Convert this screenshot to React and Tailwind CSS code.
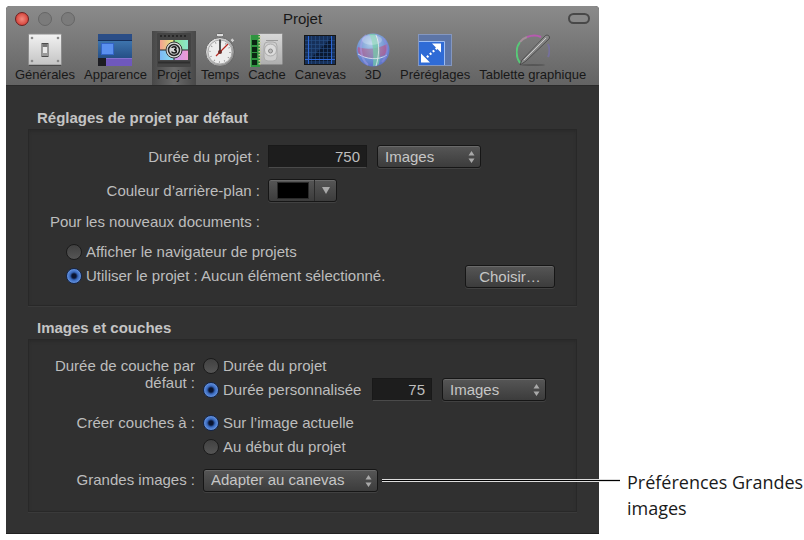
import React, { useState } from 'react';
import clsx from 'clsx';

const Switch = () => (
  <svg width="34" height="34" viewBox="0 0 34 34">
    <defs>
      <linearGradient id="plate" x1="0" y1="0" x2="0" y2="1">
        <stop offset="0" stopColor="#f2f2f2" />
        <stop offset="1" stopColor="#c4c4c4" />
      </linearGradient>
    </defs>
    <rect x="0.5" y="1" width="33" height="31" rx="1" fill="url(#plate)" stroke="#8d8d8d" />
    <path d="M1 32.500h32" stroke="#4a4a4a" />
    {[[4, 5], [30, 5], [4, 28], [30, 28]].map(([x, y]) => (
      <circle key={`${x}-${y}`} cx={x} cy={y} r="1.300" fill="#8a8a8a" />
    ))}
    <rect x="14" y="10.500" width="6" height="13" fill="#e9e9e9" stroke="#4c4c4c" />
    <path d="M14.500 11h5v3h-5z" fill="#777" />
    <path d="M14.500 20h5v3h-5z" fill="#9a9a9a" />
  </svg>
);

const Appearance = () => (
  <svg width="34" height="34" viewBox="0 0 34 34">
    <defs>
      <linearGradient id="blueBody" x1="0" y1="0" x2="0" y2="1">
        <stop offset="0" stopColor="#3d74ad" />
        <stop offset="1" stopColor="#264f86" />
      </linearGradient>
    </defs>
    <rect y="1" width="34" height="6" fill="#2a4d86" />
    <path d="M0 7.500h34" stroke="#152f5c" />
    <rect y="8" width="34" height="17" fill="url(#blueBody)" />
    <rect x="3.500" y="10.500" width="12" height="11" fill="#5a90f0" stroke="#3465c8" />
    <rect y="25" width="8" height="8" fill="#1d1d22" />
    <rect x="8" y="25" width="26" height="8" fill="#6f58bd" />
    <path d="M8 25.500h26" stroke="#8672cf" />
  </svg>
);

const Project = () => (
  <svg width="34" height="34" viewBox="0 0 34 34">
    <defs>
      <linearGradient id="warm">
        <stop offset="0" stopColor="#f4a08f" />
        <stop offset="1" stopColor="#e6ef86" />
      </linearGradient>
      <linearGradient id="fresh">
        <stop offset="0" stopColor="#8be58c" />
        <stop offset="1" stopColor="#8ce6cf" />
      </linearGradient>
      <linearGradient id="cold">
        <stop offset="0" stopColor="#7cb8f5" />
        <stop offset="1" stopColor="#8ee3ec" />
      </linearGradient>
      <linearGradient id="rose">
        <stop offset="0" stopColor="#c79af0" />
        <stop offset="1" stopColor="#f09ad2" />
      </linearGradient>
    </defs>
    <rect width="34" height="34" rx="1" fill="#444" />
    <path d="M3 3h28" stroke="#272727" strokeWidth="2" strokeDasharray="2 2" />
    <path d="M1 29.500h32" stroke="#2e2e2e" strokeWidth="2" />
    <rect x="3" y="7" width="14" height="10" fill="url(#warm)" />
    <rect x="17" y="7" width="14" height="10" fill="url(#fresh)" />
    <rect x="3" y="17" width="14" height="10" fill="url(#cold)" />
    <rect x="17" y="17" width="14" height="10" fill="url(#rose)" />
    <path d="M3 17h28M17 7v20" stroke="#262626" />
    <circle cx="17" cy="17" r="8" fill="#d9d9d9" stroke="#3a3a3a" />
    <circle cx="17" cy="17" r="5.500" fill="#d4d4d4" stroke="#262626" strokeWidth="1.500" />
    <path d="M15 15c0-1.600 4-1.700 4 .3 0 1.300-1.500 1.500-2 1.500.8 0 2.300.3 2.300 1.700 0 2-4.300 2-4.500 0" fill="none" stroke="#161616" strokeWidth="1.500" />
  </svg>
);

const Stopwatch = () => (
  <svg width="34" height="34" viewBox="0 0 34 34">
    <defs>
      <linearGradient id="steel" x1="0" y1="0" x2="1" y2="1">
        <stop offset="0" stopColor="#f4f4f4" />
        <stop offset="1" stopColor="#777" />
      </linearGradient>
    </defs>
    <rect x="13.500" y="0.500" width="7" height="3" rx="1" fill="#ddd" stroke="#666" />
    <path d="M15 3h4v3h-4z" fill="#888" />
    <path d="M27 7l2.500-2 2 2.500-2 2z" fill="#ccc" stroke="#666" strokeWidth="0.500" />
    <circle cx="17" cy="19" r="14.500" fill="url(#steel)" stroke="#666" />
    <circle cx="17" cy="19" r="12" fill="#ededed" stroke="#aaa" />
    <circle cx="17" cy="19" r="10" fill="none" stroke="#999" strokeDasharray="1 4.236" strokeWidth="1.500" />
    <path d="M17 6.500V19" stroke="#222" strokeWidth="1.500" />
    <path d="M13 23L25 11" stroke="#b8271f" strokeWidth="1.300" />
    <circle cx="17" cy="19" r="2" fill="#6b2a26" />
  </svg>
);

const Cache = () => (
  <svg width="34" height="34" viewBox="0 0 34 34">
    <defs>
      <linearGradient id="disk" x1="0" y1="0" x2="0" y2="1">
        <stop offset="0" stopColor="#d8d8d8" />
        <stop offset="1" stopColor="#aeaeae" />
      </linearGradient>
    </defs>
    <rect x="8" y="0.500" width="24.500" height="31" rx="1" fill="url(#disk)" stroke="#8c8c8c" />
    <path d="M16 7.500h12" stroke="#9a9a9a" />
    <rect x="14" y="9" width="13" height="19" rx="4" fill="#cecece" stroke="#aaa" />
    <circle cx="20.500" cy="17" r="6" fill="#dcdcdc" stroke="#aaa" />
    <circle cx="20.500" cy="18" r="2" fill="#bbb" stroke="#888" />
    <path d="M0 2h10v32H0z" fill="#2f9440" />
    <path d="M9.500 3v30" stroke="#c6cf8e" strokeWidth="2" strokeDasharray="1.500 1.500" />
    {[7, 14, 20, 27].map((y) => (
      <rect key={y} x="2" y={y} width="5" height="5" fill="#0b2713" />
    ))}
    <path d="M0 2v32" stroke="#a5d19b" />
  </svg>
);

const Canvas = () => (
  <svg width="34" height="34" viewBox="0 0 34 34">
    <rect x="1.500" y="2.500" width="31" height="29" fill="#16305a" stroke="#161616" />
    <path d="M5 28L28 5v23z" fill="#0a1830" />
    <path d="M8.500 3v28M12.500 3v28M16.500 3v28M20.500 3v28M24.500 3v28M2 7.500h30M2 11.500h30M2 15.500h30M2 19.500h30M2 23.500h30" stroke="#2a528a" strokeWidth="0.600" />
    <path d="M28.500 3v28M5.500 3v28M2 26.500h30" stroke="#2d68d8" />
  </svg>
);

const Sphere = () => (
  <svg width="34" height="34" viewBox="0 0 34 34">
    <defs>
      <radialGradient id="ball" cx="0.450" cy="0.300" r="0.750">
        <stop offset="0" stopColor="#b0cfe8" />
        <stop offset="0.600" stopColor="#6f92d2" />
        <stop offset="1" stopColor="#5a6cc4" />
      </radialGradient>
      <linearGradient id="belt">
        <stop offset="0" stopColor="#c4487f" />
        <stop offset="0.500" stopColor="#9a7fa6" />
        <stop offset="1" stopColor="#c4487f" />
      </linearGradient>
    </defs>
    <circle cx="17" cy="17" r="16.500" fill="url(#ball)" />
    <path d="M2 14c8 3 20 2 29-3 1 4 0 8-2 11-8 4-18 4-25 0-2-2-3-5-2-8z" fill="url(#belt)" opacity="0.650" />
    <path d="M13 1c4 6 5 20 4 32 3 0 5-1 6-2 2-11 0-23-4-30z" fill="#74cfa6" opacity="0.700" />
    <path d="M2 21c8 5 20 7 29 1M20 33c3-10 4-22 0-31" fill="none" stroke="#e8e6ee" opacity="0.800" />
    <path d="M10 2C2 10 4 25 12 32" fill="none" stroke="#a7a0ea" strokeWidth="2" opacity="0.500" />
    <path d="M27 5c6 8 5 17-1 24" fill="none" stroke="#8f8ae0" strokeWidth="2" opacity="0.500" />
    <ellipse cx="16" cy="7" rx="10" ry="5" fill="#fff" opacity="0.250" />
  </svg>
);

const Presets = () => (
  <svg width="34" height="34" viewBox="0 0 34 34">
    <rect x="0.500" y="1.500" width="33" height="31" fill="#5d75a6" stroke="#8497c0" />
    <rect x="1" y="8" width="25" height="24" fill="#2f6bd6" />
    <path d="M1 8.500h25.500V32" fill="none" stroke="#9cbcf2" />
    <path d="M6 27L21 13" stroke="#fff" strokeWidth="2.200" strokeDasharray="2 2" />
    <path d="M14 10.500h9v9zM3 20.500v9h9z" fill="#fff" />
  </svg>
);

const Tablet = () => (
  <svg width="34" height="34" viewBox="0 0 34 34">
    <defs>
      <linearGradient id="pen" x1="0" y1="0" x2="1" y2="1">
        <stop offset="0" stopColor="#e2e2e2" />
        <stop offset="1" stopColor="#2c2c2c" />
      </linearGradient>
    </defs>
    <ellipse cx="17" cy="32" rx="12" ry="1" fill="#484848" opacity="0.600" />
    <g fill="none" strokeWidth="2">
      <path d="M4 30C-1 23 0 14 4 9" stroke="#58c978" />
      <path d="M4 9c2-3 4-4 7-5" stroke="#a58f9a" />
      <path d="M11 4c5-2 10-2 14 0" stroke="#b75ab0" />
      <path d="M32 11c2 5 2 9 0 13" stroke="#75709a" />
    </g>
    <path d="M4 32L6 27 29 3c2-2 6 0 4 3L10 28z" fill="url(#pen)" stroke="#3a3a3a" strokeWidth="0.700" />
    <path d="M8 27L30 5" stroke="#c9c9c9" />
  </svg>
);

const TABS = [
  { label: 'Générales', Icon: Switch },
  { label: 'Apparence', Icon: Appearance },
  { label: 'Projet', Icon: Project },
  { label: 'Temps', Icon: Stopwatch },
  { label: 'Cache', Icon: Cache },
  { label: 'Canevas', Icon: Canvas },
  { label: '3D', Icon: Sphere },
  { label: 'Préréglages', Icon: Presets },
  { label: 'Tablette graphique', Icon: Tablet },
];

const RAISED = 'h-[23px] rounded-[3px] border border-[#161616] bg-linear-to-b from-[#565656] to-[#3c3c3c] shadow-[inset_0_1px_0_#6a6a6a,0_1px_0_#414141]';

const Popup = ({ id, label, options, className }) => (
  <div className={clsx('relative', className)}>
    <select id={id} aria-label={label} className={clsx(RAISED, 'block w-full appearance-none pl-[7px] pr-5 text-[#c6c6c6]')}>
      {options.map((o) => <option key={o}>{o}</option>)}
    </select>
    <svg className="pointer-events-none absolute top-[6px] right-[6px]" width="7" height="12" viewBox="0 0 7 12" fill="#a9a9a9">
      <path d="M3.500 0L6.500 4.500h-6zM3.500 12L6.500 7.500h-6z" />
    </svg>
  </div>
);

const NumberField = ({ id, label, value, className }) => (
  <input
    id={id}
    aria-label={label}
    defaultValue={value}
    className={clsx('h-[23px] border border-[#191919] border-b-[#4a4a4a] bg-[#1d1d1d] pr-[6px] text-right text-[#bdbdbd]', className)}
  />
);

const Radio = ({ name, label, defaultChecked, className }) => (
  <label className={clsx('flex h-6 items-center gap-1 whitespace-nowrap', className)}>
    <input
      type="radio"
      name={name}
      defaultChecked={defaultChecked}
      className="size-4 shrink-0 appearance-none rounded-full border border-[#1b1b1b] bg-linear-to-b from-[#414141] to-[#555555] checked:border-[#14264a] checked:bg-radial checked:from-[#0a1430] checked:from-20% checked:via-[#3767bb] checked:via-40% checked:to-[#6c9ae6] checked:to-75%"
    />
    {label}
  </label>
);

const Group = ({ title, children }) => (
  <section>
    <h2 className="ml-[9px] h-[21px] leading-5 font-bold text-[#c4c4c4]">{title}</h2>
    <div className="border border-[#282828] bg-[#303030] shadow-[0_1px_0_#3a3a3a,inset_0_2px_3px_#2b2b2b]">{children}</div>
  </section>
);

export default function App() {
  const [tab, setTab] = useState('Projet');

  return (
    <div className="flex bg-white py-[6px] pl-[6px] font-['Liberation_Sans',Arial,sans-serif] text-[15px] leading-5 text-[#bdbdbd]">
      <main className="min-w-0 flex-1 rounded-t-[4px] border-b border-[#222222] bg-[#323232]">
        <header className="rounded-t-[4px] border-b border-[#2a2a2a] bg-linear-to-b from-[#8b8b8b] to-[#636363] text-[#181818]">
          <div className="grid h-[25px] grid-cols-3 items-center px-[9px]">
            <div className="flex gap-[9px]">
              <button aria-label="Fermer" className="size-[14px] rounded-full border border-[#6b2020] bg-radial from-[#f28a80] to-[#c81e1e]" />
              <button aria-label="Réduire" className="size-[14px] rounded-full border border-[#666666] bg-[#7b7b7b]" />
              <button aria-label="Agrandir" className="size-[14px] rounded-full border border-[#666666] bg-[#7b7b7b]" />
            </div>
            <h1 className="text-center">Projet</h1>
            <button aria-label="Masquer la barre" className="h-[11px] w-[22px] justify-self-end rounded-full border-2 border-[#484848] bg-[#888888]" />
          </div>
          <nav className="flex gap-px pl-[5px]">
            {TABS.map(({ label, Icon }) => (
              <button
                key={label}
                onClick={() => setTab(label)}
                className={clsx(
                  'flex h-[54px] min-w-[44px] flex-col items-center px-1 pt-[2px] whitespace-nowrap',
                  tab === label && 'bg-linear-to-r from-[#484848] via-[#6a6a6a] to-[#484848]',
                )}
              >
                <Icon />
                <span className="text-[13px] leading-4">{label}</span>
              </button>
            ))}
          </nav>
        </header>

        <div className="flex flex-col gap-3 px-[22px] pt-[22px] pb-[21px]">
          <Group title="Réglages de projet par défaut">
            <div className="grid grid-cols-[231px_1fr] items-center gap-x-2 pt-[15px]">
              <label htmlFor="duree" className="text-right">Durée du projet :</label>
              <div className="flex gap-[10px]">
                <NumberField id="duree" value="750" className="w-[99px]" />
                <Popup label="Unité de durée" options={['Images', 'Secondes']} className="w-[104px]" />
              </div>
              <label htmlFor="couleur" className="mt-[11px] text-right">Couleur d’arrière-plan :</label>
              <button id="couleur" className={clsx(RAISED, 'mt-[11px] flex w-[69px] items-center')}>
                <span className="ml-2 h-[17px] w-8 border border-[#2a2a2a] bg-black" />
                <span className="ml-[5px] flex h-full flex-1 items-center justify-center border-l border-[#2a2a2a]">
                  <svg width="8" height="7" viewBox="0 0 8 7" fill="#a9a9a9"><path d="M0 0h8L4 7z" /></svg>
                </span>
              </button>
              <p className="mt-[10px] text-right">Pour les nouveaux documents :</p>
            </div>
            <div className="flex items-end justify-between pt-2 pr-[21px] pb-[17px] pl-[37px]">
              <div>
                <Radio name="nouveau" label="Afficher le navigateur de projets" />
                <Radio name="nouveau" label="Utiliser le projet : Aucun élément sélectionné." defaultChecked />
              </div>
              <button className={clsx(RAISED, 'w-[90px] text-[#c6c6c6]')}>Choisir…</button>
            </div>
          </Group>

          <Group title="Images et couches">
            <div className="grid grid-cols-[166px_1fr] gap-x-2 gap-y-[9px] pt-[14px] pb-[19px]">
              <p className="pt-[3px] pl-5 text-right leading-[17px]">Durée de couche par défaut :</p>
              <div>
                <Radio name="couche" label="Durée du projet" />
                <div className="flex">
                  <Radio name="couche" label="Durée personnalisée" defaultChecked className="w-[169px]" />
                  <NumberField label="Durée de couche" value="75" className="w-[60px]" />
                  <Popup label="Unité de couche" options={['Images', 'Secondes']} className="ml-[10px] w-[104px]" />
                </div>
              </div>
              <p className="text-right leading-6">Créer couches à :</p>
              <div>
                <Radio name="creer" label="Sur l’image actuelle" defaultChecked />
                <Radio name="creer" label="Au début du projet" />
              </div>
              <label htmlFor="grandes" className="text-right leading-6">Grandes images :</label>
              {/* leader line runs out of the window to the caption */}
              <div className="-mr-[44px] flex items-center gap-1">
                <Popup id="grandes" options={['Adapter au canevas', 'Conserver la taille originale']} className="w-[175px]" />
                <div className="z-10 h-[3px] flex-1 border-y border-[#dddddd] bg-black" />
              </div>
            </div>
          </Group>
        </div>
      </main>

      <aside className="flex w-[205px] shrink-0 items-end pb-[13px] pl-7">
        <p className="font-['Open_Sans',sans-serif] text-[18px] leading-[26px] text-[#1a1a1a]">Préférences Grandes images</p>
      </aside>
    </div>
  );
}
